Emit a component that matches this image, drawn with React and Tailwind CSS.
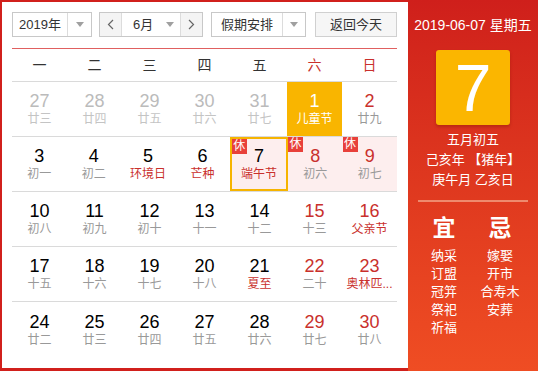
const WEEK = ['一', '二', '三', '四', '五', '六', '日']

// k: o = other month, w = weekend (red number), f = festival (red lunar), h = holiday badge
const ROWS = [
  [['27', '廿三', 'o'], ['28', '廿四', 'o'], ['29', '廿五', 'o'], ['30', '廿六', 'o'], ['31', '廿七', 'o'], ['1', '儿童节', 'today'], ['2', '廿九', 'w']],
  [['3', '初一'], ['4', '初二'], ['5', '环境日', 'f'], ['6', '芒种', 'f'], ['7', '端午节', 'fhs'], ['8', '初六', 'wh'], ['9', '初七', 'wh']],
  [['10', '初八'], ['11', '初九'], ['12', '初十'], ['13', '十一'], ['14', '十二'], ['15', '十三', 'w'], ['16', '父亲节', 'wf']],
  [['17', '十五'], ['18', '十六'], ['19', '十七'], ['20', '十八'], ['21', '夏至', 'f'], ['22', '二十', 'w'], ['23', '奥林匹...', 'wf']],
  [['24', '廿二'], ['25', '廿三'], ['26', '廿四'], ['27', '廿五'], ['28', '廿六'], ['29', '廿七', 'w'], ['30', '廿八', 'w']],
]

const FONT = { fontFamily: '"Liberation Sans", Arial, "Noto Sans CJK SC", sans-serif' }

export default function App() {
  return (
    <div className="flex w-[538px] h-[371px] bg-[#d1201c] overflow-hidden" style={FONT}>
      {/* ── Calendar ─────────────────────────────── */}
      <div className="w-[406px] mt-[2px] mb-[3px] ml-[2px] bg-white pl-[10px] pr-[11px] pt-[10px]">
        <Toolbar />
        <div className="mt-[11px] border-t border-[#e06060] flex h-[34px] items-center border-b border-b-[#dadada]">
          {WEEK.map((w, i) => (
            <div key={w} className={`flex-1 text-center text-[14px] ${i > 4 ? 'text-[#c9302c]' : 'text-[#333]'}`}>{w}</div>
          ))}
        </div>
        {ROWS.map((row, r) => (
          <div key={r} className={`flex h-[55px] ${r < 4 ? 'border-b border-[#dadada]' : ''}`}>
            {row.map(([d, l, k = ''], i) => <Cell key={i} d={d} l={l} k={k} />)}
          </div>
        ))}
      </div>

      {/* ── Side panel ───────────────────────────── */}
      <div className="flex-1 flex flex-col items-center bg-gradient-to-b from-[#cf1f1b] to-[#ef4d23] text-white">
        <div className="mt-[16px] text-[14px] leading-[18px]">2019-06-07 星期五</div>
        <div className="mt-[16px] w-[74px] h-[75px] rounded-[3px] bg-[#fbb600] shadow-[0_2px_3px_rgba(120,20,0,0.35)] flex items-center justify-center text-[66px] leading-none">7</div>
        <div className="mt-[5px] text-[13px] leading-[20px] text-center">
          <div>五月初五</div>
          <div>己亥年 【猪年】</div>
          <div>庚午月 乙亥日</div>
        </div>
        <div className="mt-[10px] w-[110px] h-[2px] bg-[#ee8a6e]" />
        <div className="mt-[13px] flex w-[110px] text-center">
          <div className="w-[56px] -ml-[2px]">
            <div className="text-[23px] leading-[26px] font-bold">宜</div>
            <div className="mt-[6px] text-[13px] leading-[18px]">
              {['纳采', '订盟', '冠笄', '祭祀', '祈福'].map(t => <div key={t}>{t}</div>)}
            </div>
          </div>
          <div className="w-[56px]">
            <div className="text-[23px] leading-[26px] font-bold">忌</div>
            <div className="mt-[6px] text-[13px] leading-[18px]">
              {['嫁娶', '开市', '合寿木', '安葬'].map(t => <div key={t}>{t}</div>)}
            </div>
          </div>
        </div>
      </div>
    </div>
  )
}

function Arrow() {
  return <span className="w-0 h-0 border-l-[4px] border-r-[4px] border-t-[5px] border-l-transparent border-r-transparent border-t-[#a0a0a0]" />
}

function Toolbar() {
  return (
    <div className="flex h-[25px] text-[13px] text-[#333]">
      <div className="w-[80px] flex border border-[#c8c8c8]">
        <div className="w-[54px] flex items-center justify-center">2019年</div>
        <div className="flex-1 border-l border-[#dcdcdc] flex items-center justify-center"><Arrow /></div>
      </div>
      <div className="ml-[7px] w-[104px] flex border border-[#c8c8c8]">
        <div className="w-[22px] bg-[#f4f4f4] border-r border-[#dcdcdc] flex items-center justify-center">
          <svg width="7" height="11" viewBox="0 0 7 11"><path d="M6 1L1.5 5.5L6 10" fill="none" stroke="#666" strokeWidth="1.2" /></svg>
        </div>
        <div className="flex-1 flex items-center pl-[11px]">6月</div>
        <div className="w-[20px] flex items-center justify-center"><Arrow /></div>
        <div className="w-[22px] bg-[#f4f4f4] border-l border-[#dcdcdc] flex items-center justify-center">
          <svg width="7" height="11" viewBox="0 0 7 11"><path d="M1 1L5.5 5.5L1 10" fill="none" stroke="#666" strokeWidth="1.2" /></svg>
        </div>
      </div>
      <div className="ml-[8px] w-[95px] flex border border-[#c8c8c8]">
        <div className="w-[70px] flex items-center justify-center">假期安排</div>
        <div className="flex-1 border-l border-[#dcdcdc] flex items-center justify-center"><Arrow /></div>
      </div>
      <div className="ml-[9px] flex-1 border border-[#d0d0d0] bg-[#f6f6f6] flex items-center justify-center">返回今天</div>
    </div>
  )
}

function Cell({ d, l, k }) {
  const today = k === 'today'
  const pink = k.includes('h')
  let num = 'text-black'
  if (k === 'o') num = 'text-[#bbb]'
  if (k.includes('w')) num = 'text-[#c9302c]'
  if (today) num = 'text-white'
  let lun = 'text-[#999]'
  if (k === 'o') lun = 'text-[#c4c4c4]'
  if (k.includes('f')) lun = 'text-[#c9302c]'
  if (today) lun = 'text-white'
  return (
    <div className={`relative flex-1 flex flex-col items-center justify-center ${today ? 'bg-[#f9b500]' : pink ? 'bg-[#fdeeee]' : ''} ${k.includes('s') ? 'border-2 border-[#f6b400]' : ''}`}>
      {pink && <span className="absolute left-0 top-0 w-[15px] h-[15px] bg-[#e8403a] text-white text-[12px] leading-[15px] text-center">休</span>}
      <div className={`text-[18px] leading-[20px] ${num}`}>{d}</div>
      <div className={`text-[12px] leading-[16px] whitespace-nowrap ${lun}`}>{l}</div>
    </div>
  )
}
